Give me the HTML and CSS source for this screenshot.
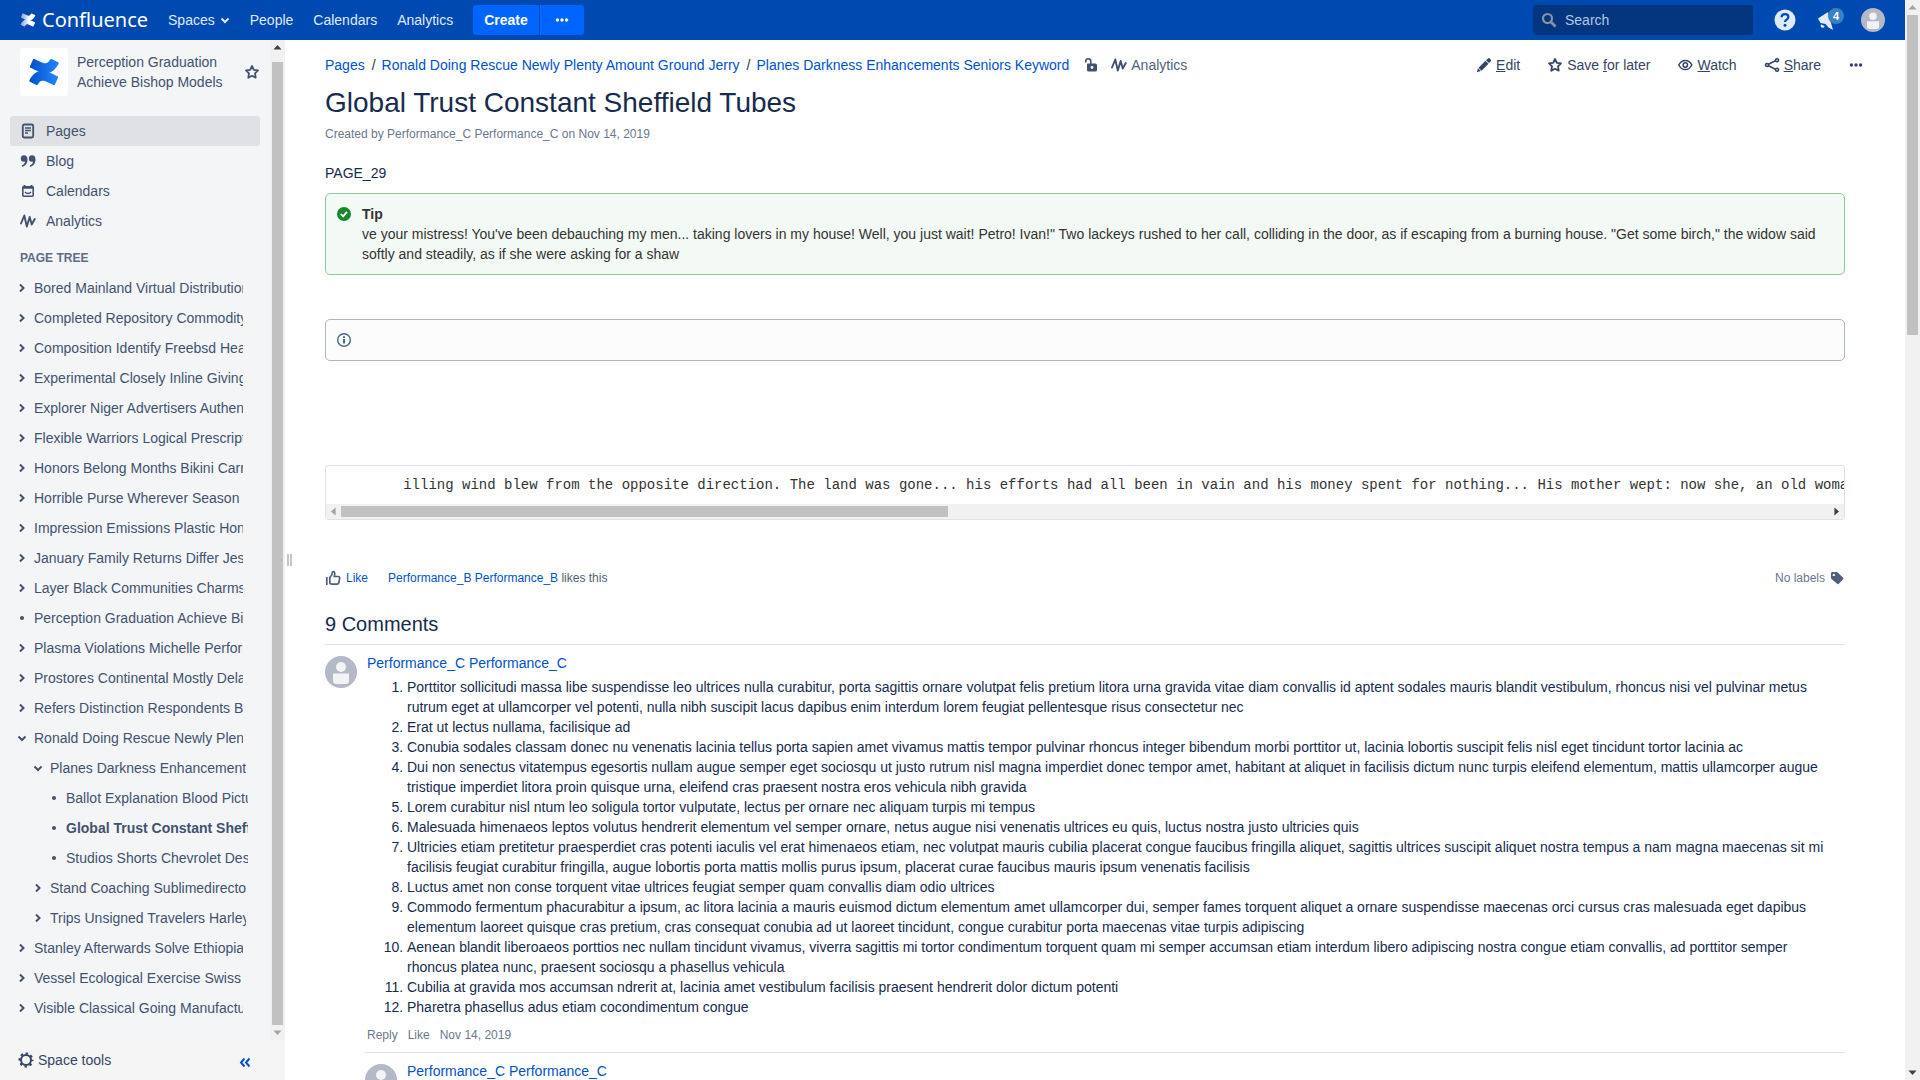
FILE: index.html
```html
<!DOCTYPE html>
<html lang="en">
<head>
<meta charset="utf-8">
<title>Global Trust Constant Sheffield Tubes - Confluence</title>
<link rel="stylesheet" href="styles.css">
</head>
<body>
<svg class="defs" aria-hidden="true">
  <linearGradient id="brand" x1="0" y1="0" x2="1" y2="0"><stop offset="0" stop-color="#0052cc"/><stop offset="1" stop-color="#2684ff"/></linearGradient>
  <linearGradient id="brand-light" x1="0" y1="0" x2="1" y2="0"><stop offset="0" stop-color="#fff" stop-opacity=".5"/><stop offset=".6" stop-color="#fff"/></linearGradient>
  <symbol id="mark-top" viewBox="0 0 32 32"><path d="M30.600 7.700c.3-.6 0-1.200-.5-1.500l-6.400-3.100c-.6-.3-1.200 0-1.500.5-2.600 4.400-5 4.400-9.400 2.300L6.500 2.900c-.6-.3-1.300 0-1.500.5L2 10.200c-.3.600 0 1.200.5 1.500 1.300.6 4 1.900 6.400 3 8.600 4.200 16 3.800 21.700-7z"/></symbol>
  <symbol id="mark-bottom" viewBox="0 0 32 32"><path d="M1.400 24.300c-.3.600 0 1.200.5 1.500l6.400 3.100c.6.300 1.200 0 1.500-.5 2.600-4.400 5-4.400 9.400-2.300l6.300 3c.6.300 1.300 0 1.500-.5l3-6.800c.3-.6 0-1.200-.5-1.500-1.300-.6-4-1.900-6.400-3-8.600-4.200-16-3.800-21.700 7z"/></symbol>
  <symbol id="right" viewBox="0 0 10 10"><path d="M3 1.500 6.500 5 3 8.500" fill="none" stroke="currentColor" stroke-width="2"/></symbol>
  <symbol id="down" viewBox="0 0 10 10"><path d="M1.500 3.500 5 7l3.500-3.500" fill="none" stroke="currentColor" stroke-width="2"/></symbol>
  <symbol id="dot" viewBox="0 0 10 10"><circle cx="5" cy="5" r="2" fill="currentColor"/></symbol>
  <symbol id="star" viewBox="0 0 16 16"><path d="m8 2 1.800 3.800 4.200.6-3 3 .7 4.300L8 11.700l-3.700 2 .7-4.300-3-3 4.200-.6z" fill="none" stroke="currentColor" stroke-width="1.800" stroke-linejoin="round"/></symbol>
  <symbol id="wave" viewBox="0 0 16 16"><path d="M1 10.500 4.300 2.500 6.800 13.500 9.700 4l2 7.500L14.800 6" fill="none" stroke="currentColor" stroke-width="1.900" stroke-linejoin="round" stroke-linecap="round"/></symbol>
  <symbol id="dots" viewBox="0 0 16 16"><g fill="currentColor"><circle cx="3.400" cy="8" r="1.700"/><circle cx="8" cy="8" r="1.700"/><circle cx="12.600" cy="8" r="1.700"/></g></symbol>
  <symbol id="person" viewBox="0 0 32 32"><circle cx="16" cy="16" r="16" fill="#b3b9c6"/><circle cx="16" cy="11" r="5" fill="#f2f3f5"/><path d="M8 17.500h16V25a3 3 0 0 1-3 3H11a3 3 0 0 1-3-3z" fill="#f2f3f5"/></symbol>
</svg>

<div class="window">
  <div class="app">
    <header class="topbar">
      <a class="logo" href="#">
        <svg class="i16" fill="url(#brand-light)"><use href="#mark-top"/><use href="#mark-bottom"/></svg>
        <span>Confluence</span>
      </a>
      <nav class="topnav">
        <a href="#">Spaces <svg class="i10"><use href="#down"/></svg></a>
        <a href="#">People</a>
        <a href="#">Calendars</a>
        <a href="#">Analytics</a>
      </nav>
      <div class="create">
        <button type="button">Create</button>
        <button type="button" aria-label="Create from template"><svg class="i16"><use href="#dots"/></svg></button>
      </div>
      <div class="tools">
        <label class="search">
          <svg class="i16" viewBox="0 0 16 16" fill="none" stroke="currentColor"><circle cx="6.500" cy="6.500" r="4.500" stroke-width="2.200"/><path d="m10 10 4.500 4.500" stroke-width="2.600"/></svg>
          <input type="search" placeholder="Search" aria-label="Search">
        </label>
        <button type="button" class="icon-btn" aria-label="Help">
          <svg class="i22" viewBox="0 0 22 22"><circle cx="11" cy="11" r="10.500" fill="#deebff"/><path d="M7.600 8.300c.1-2 1.500-3.100 3.400-3.100s3.400 1.100 3.400 2.900c0 2.600-3.400 2.500-3.400 5" fill="none" stroke="#0049b0" stroke-width="2.200"/><circle cx="11" cy="16.200" r="1.500" fill="#0049b0"/></svg>
        </button>
        <button type="button" class="icon-btn news" aria-label="Notifications">
          <svg class="i22" viewBox="0 0 22 22" fill="#deebff"><path d="M2 9.500 12 3l5 18-4.500-2.500-3-3.500L4.500 14z"/><path d="M5 15.600a2 2 0 1 0 3.600 1.400z"/></svg>
          <span class="badge">4</span>
        </button>
        <button type="button" class="icon-btn" aria-label="Profile"><svg class="i24"><use href="#person"/></svg></button>
      </div>
    </header>

    <div class="body">
      <aside class="sidebar">
        <div class="side-main">
          <div class="side-content">
            <div class="space">
              <a class="space-logo" href="#" aria-label="Space home"><svg class="i32" fill="url(#brand)"><use href="#mark-top"/><use href="#mark-bottom"/></svg></a>
              <a class="space-name" href="#">Perception Graduation Achieve Bishop Models</a>
              <button type="button" class="icon-btn" aria-label="Favourite space"><svg class="i16"><use href="#star"/></svg></button>
            </div>
            <nav class="side-nav">
              <a class="current" href="#"><svg class="i16" viewBox="0 0 16 16" fill="none" stroke="currentColor"><rect x="2.800" y="1.500" width="10.400" height="13" rx="1.500" stroke-width="1.800"/><path d="M5 5h6M5 7.500h6M5 10h3" stroke-width="1.300"/></svg>Pages</a>
              <a href="#"><svg class="i16" viewBox="0 0 16 16" fill="currentColor"><path d="M4 2.200c2.200 0 3.500 1.500 3.500 4.200 0 4-2.200 6.800-5.600 7.400v-1.500c1.900-.6 3-2 3.200-3.800-.3.100-.7.200-1.100.200A3.200 3.200 0 0 1 .8 5.500 3.300 3.300 0 0 1 4 2.200zm8 0c2.200 0 3.500 1.500 3.500 4.200 0 4-2.200 6.800-5.600 7.400v-1.500c1.900-.6 3-2 3.200-3.800-.3.100-.7.200-1.100.200a3.200 3.200 0 0 1-3.200-3.200A3.300 3.300 0 0 1 12 2.200z"/></svg>Blog</a>
              <a href="#"><svg class="i16" viewBox="0 0 16 16" fill="none" stroke="currentColor"><rect x="2.800" y="3.800" width="10.400" height="9.400" rx="1" stroke-width="1.600"/><path d="M2 4.800h12M4.500 2v2M11.500 2v2" stroke-width="2"/><path d="M5 9c1.600 2 4.400 2 6 0" stroke-width="1.300"/></svg>Calendars</a>
              <a href="#"><svg class="i16"><use href="#wave"/></svg>Analytics</a>
            </nav>
            <h2>PAGE TREE</h2>
            <ul class="tree">
              <li><svg class="i10"><use href="#right"/></svg><a href="#">Bored Mainland Virtual Distribution</a></li>
              <li><svg class="i10"><use href="#right"/></svg><a href="#">Completed Repository Commodity</a></li>
              <li><svg class="i10"><use href="#right"/></svg><a href="#">Composition Identify Freebsd Health</a></li>
              <li><svg class="i10"><use href="#right"/></svg><a href="#">Experimental Closely Inline Giving</a></li>
              <li><svg class="i10"><use href="#right"/></svg><a href="#">Explorer Niger Advertisers Authentic</a></li>
              <li><svg class="i10"><use href="#right"/></svg><a href="#">Flexible Warriors Logical Prescription</a></li>
              <li><svg class="i10"><use href="#right"/></svg><a href="#">Honors Belong Months Bikini Carried</a></li>
              <li><svg class="i10"><use href="#right"/></svg><a href="#">Horrible Purse Wherever Season</a></li>
              <li><svg class="i10"><use href="#right"/></svg><a href="#">Impression Emissions Plastic Honors</a></li>
              <li><svg class="i10"><use href="#right"/></svg><a href="#">January Family Returns Differ Jesse</a></li>
              <li><svg class="i10"><use href="#right"/></svg><a href="#">Layer Black Communities Charms</a></li>
              <li><svg class="i10"><use href="#dot"/></svg><a href="#">Perception Graduation Achieve Bishop</a></li>
              <li><svg class="i10"><use href="#right"/></svg><a href="#">Plasma Violations Michelle Performing</a></li>
              <li><svg class="i10"><use href="#right"/></svg><a href="#">Prostores Continental Mostly Delay</a></li>
              <li><svg class="i10"><use href="#right"/></svg><a href="#">Refers Distinction Respondents Bow</a></li>
              <li><svg class="i10"><use href="#down"/></svg><a href="#">Ronald Doing Rescue Newly Plenty</a></li>
              <li class="l2"><svg class="i10"><use href="#down"/></svg><a href="#">Planes Darkness Enhancements</a></li>
              <li class="l3"><svg class="i10"><use href="#dot"/></svg><a href="#">Ballot Explanation Blood Pictures</a></li>
              <li class="l3"><svg class="i10"><use href="#dot"/></svg><a class="active" href="#">Global Trust Constant Sheffield</a></li>
              <li class="l3"><svg class="i10"><use href="#dot"/></svg><a href="#">Studios Shorts Chevrolet Desk</a></li>
              <li class="l2"><svg class="i10"><use href="#right"/></svg><a href="#">Stand Coaching Sublimedirectory</a></li>
              <li class="l2"><svg class="i10"><use href="#right"/></svg><a href="#">Trips Unsigned Travelers Harley</a></li>
              <li><svg class="i10"><use href="#right"/></svg><a href="#">Stanley Afterwards Solve Ethiopian</a></li>
              <li><svg class="i10"><use href="#right"/></svg><a href="#">Vessel Ecological Exercise Swiss</a></li>
              <li><svg class="i10"><use href="#right"/></svg><a href="#">Visible Classical Going Manufacture</a></li>
            </ul>
          </div>
          <div class="bar-v"><i class="arrow up dark"></i><i class="thumb full"></i><i class="arrow down"></i></div>
        </div>
        <div class="side-foot">
          <button type="button" class="space-tools"><svg class="i16" viewBox="0 0 16 16" fill="none" stroke="currentColor"><circle cx="8" cy="8" r="5" stroke-width="2"/><circle cx="8" cy="8" r="6.500" stroke-width="2" stroke-dasharray="2.500 2.605" stroke-dashoffset="1.250"/></svg>Space tools</button>
          <button type="button" class="collapse" aria-label="Collapse sidebar"><svg class="i12" viewBox="0 0 12 12" fill="none" stroke="currentColor" stroke-width="2"><path d="M5.500 2.500 2 6.500l3.500 4M10.500 2.500 7 6.500l3.500 4"/></svg></button>
        </div>
      </aside>
      <div class="splitter"><i></i><i></i></div>

      <main class="page">
        <div class="page-head">
          <div class="crumbs">
            <a href="#">Pages</a><span class="sep">/</span><a href="#">Ronald Doing Rescue Newly Plenty Amount Ground Jerry</a><span class="sep">/</span><a href="#">Planes Darkness Enhancements Seniors Keyword</a>
            <button type="button" class="icon-btn lock" aria-label="Unrestricted"><svg class="i16" viewBox="0 0 16 16"><path d="M2.800 5.500V4.200a2.500 2.500 0 0 1 5 0V7" fill="none" stroke="currentColor" stroke-width="1.600"/><path fill-rule="evenodd" d="M4.500 6.500h8A1.500 1.500 0 0 1 14 8v5a1.500 1.500 0 0 1-1.500 1.500h-7A1.500 1.500 0 0 1 4 13V7zM9 9a1.400 1.400 0 1 0 0 2.800A1.400 1.400 0 0 0 9 9z" fill="currentColor"/></svg></button>
            <a class="muted" href="#"><svg class="i16"><use href="#wave"/></svg>Analytics</a>
          </div>
          <div class="actions">
            <button type="button"><svg class="i16" viewBox="0 0 16 16" fill="currentColor"><path d="M10 3.200 12 1.500c.6-.5 1.300-.5 1.800 0l.9.900c.5.500.5 1.200 0 1.800L13 6zM9.500 3.700l3 3-7 7-3-3zM2 11.200l2.800 2.800-4 1.200z"/></svg><span><u>E</u>dit</span></button>
            <button type="button"><svg class="i16"><use href="#star"/></svg><span>Save <u>f</u>or later</span></button>
            <button type="button"><svg class="i16" viewBox="0 0 16 16" fill="none" stroke="currentColor" stroke-width="1.500"><path d="M1.800 8C3.300 5 5.500 3.400 8.300 3.400S13.300 5 14.800 8c-1.500 3-3.700 4.600-6.500 4.600S3.300 11 1.800 8z"/><circle cx="8.300" cy="8" r="2.200"/></svg><span><u>W</u>atch</span></button>
            <button type="button"><svg class="i16" viewBox="0 0 16 16" fill="none" stroke="currentColor" stroke-width="1.600"><path d="m4.500 7.200 7-3.400M4.500 8.800l7 3.400"/><circle cx="3" cy="8" r="1.500"/><circle cx="13" cy="3.200" r="1.500"/><circle cx="13" cy="12.800" r="1.500"/></svg><span><u>S</u>hare</span></button>
            <button type="button" aria-label="More"><svg class="i16"><use href="#dots"/></svg></button>
          </div>
        </div>

        <h1>Global Trust Constant Sheffield Tubes</h1>
        <p class="meta">Created by <a href="#">Performance_C Performance_C</a> on <a href="#">Nov 14, 2019</a></p>
        <p class="text">PAGE_29</p>

        <div class="macro tip">
          <svg class="i16" viewBox="0 0 16 16"><circle cx="8" cy="8" r="7" fill="#14892c"/><path d="m4.800 8 2.300 2.400L11 5.800" fill="none" stroke="#fff" stroke-width="1.800"/></svg>
          <div><strong>Tip</strong><p>ve your mistress! You've been debauching my men... taking lovers in my house! Well, you just wait! Petro! Ivan!" Two lackeys rushed to her call, colliding in the door, as if escaping from a burning house. "Get some birch," the widow said softly and steadily, as if she were asking for a shaw</p></div>
        </div>
        <div class="macro info">
          <svg class="i16" viewBox="0 0 16 16"><circle cx="8" cy="8" r="6.300" fill="none" stroke="#4a6785" stroke-width="1.400"/><path d="M7 7h2v4.500H7zM7 4.300h2v1.600H7z" fill="#4a6785"/></svg>
        </div>
        <div class="code">
          <pre>        illing wind blew from the opposite direction. The land was gone... his efforts had all been in vain and his money spent for nothing... His mother wept: now she, an old woman</pre>
          <div class="bar-h"><i class="arrow left"></i><i class="thumb"></i><i class="arrow right dark"></i></div>
        </div>

        <div class="likes">
          <button type="button"><svg class="i16" viewBox="0 0 16 16" fill="none" stroke="#505f79" stroke-width="1.700" stroke-linejoin="round"><path d="M1.800 7v8"/><path d="M4.800 7.500C6.500 6 7.300 4.500 7.500 2.200c.1-.9 2.300-.9 2.300 1.300 0 1-.3 2-.6 3h4c1.100 0 1.600.7 1.500 1.600l-.9 4.700c-.2.900-.8 1.400-1.700 1.400H6.800c-1.200 0-2-.7-2-1.900z"/></svg>Like</button>
          <span class="who"><a href="#">Performance_B Performance_B</a> likes this</span>
          <span class="labels">No labels <svg class="i16" viewBox="0 0 16 16"><path fill-rule="evenodd" d="M2 3.500C2 2.500 2.600 2 3.500 2h4c.5 0 .9.200 1.300.5l5 5c.7.700.7 1.400 0 2.100l-3.700 4c-.7.700-1.500.7-2.200 0L2.500 9C2.200 8.600 2 8.300 2 7.800zM4.800 3.700a1.200 1.200 0 1 0 0 2.400 1.200 1.200 0 0 0 0-2.400z" fill="#505f79"/></svg></span>
        </div>

        <section class="comments">
          <h2>9 Comments</h2>
          <article class="comment">
            <svg class="i32"><use href="#person"/></svg>
            <div class="comment-body">
              <a class="author" href="#">Performance_C Performance_C</a>
              <ol>
                <li>Porttitor sollicitudi massa libe suspendisse leo ultrices nulla curabitur, porta sagittis ornare volutpat felis pretium litora urna gravida vitae diam convallis id aptent sodales mauris blandit vestibulum, rhoncus nisi vel pulvinar metus rutrum eget at ullamcorper vel potenti, nulla nibh suscipit lacus dapibus enim interdum lorem feugiat pellentesque risus consectetur nec</li>
                <li>Erat ut lectus nullama, facilisique ad</li>
                <li>Conubia sodales classam donec nu venenatis lacinia tellus porta sapien amet vivamus mattis tempor pulvinar rhoncus integer bibendum morbi porttitor ut, lacinia lobortis suscipit felis nisl eget tincidunt tortor lacinia ac</li>
                <li>Dui non senectus vitatempus egesortis nullam augue semper eget sociosqu ut justo rutrum nisl magna imperdiet donec tempor amet, habitant at aliquet in facilisis dictum nunc turpis eleifend elementum, mattis ullamcorper augue tristique imperdiet litora proin quisque urna, eleifend cras praesent nostra eros vehicula nibh gravida</li>
                <li>Lorem curabitur nisl ntum leo soligula tortor vulputate, lectus per ornare nec aliquam turpis mi tempus</li>
                <li>Malesuada himenaeos leptos volutus hendrerit elementum vel semper ornare, netus augue nisi venenatis ultrices eu quis, luctus nostra justo ultricies quis</li>
                <li>Ultricies etiam pretitetur praesperdiet cras potenti iaculis vel erat himenaeos etiam, nec volutpat mauris cubilia placerat congue faucibus fringilla aliquet, sagittis ultrices suscipit aliquet nostra tempus a nam magna maecenas sit mi facilisis feugiat curabitur fringilla, augue lobortis porta mattis mollis purus ipsum, placerat curae faucibus mauris ipsum venenatis facilisis</li>
                <li>Luctus amet non conse torquent vitae ultrices feugiat semper quam convallis diam odio ultrices</li>
                <li>Commodo fermentum phacurabitur a ipsum, ac litora lacinia a mauris euismod dictum elementum amet ullamcorper dui, semper fames torquent aliquet a ornare suspendisse maecenas orci cursus cras malesuada eget dapibus elementum laoreet quisque cras pretium, cras consequat conubia ad ut laoreet tincidunt, congue curabitur porta maecenas vitae turpis adipiscing</li>
                <li>Aenean blandit liberoaeos porttios nec nullam tincidunt vivamus, viverra sagittis mi tortor condimentum torquent quam mi semper accumsan etiam interdum libero adipiscing nostra congue etiam convallis, ad porttitor semper rhoncus platea nunc, praesent sociosqu a phasellus vehicula</li>
                <li>Cubilia at gravida mos accumsan ndrerit at, lacinia amet vestibulum facilisis praesent hendrerit dolor dictum potenti</li>
                <li>Pharetra phasellus adus etiam cocondimentum congue</li>
              </ol>
              <div class="comment-actions"><a href="#">Reply</a><a href="#">Like</a><a href="#">Nov 14, 2019</a></div>
            </div>
          </article>
          <article class="comment reply">
            <svg class="i32"><use href="#person"/></svg>
            <div class="comment-body"><a class="author" href="#">Performance_C Performance_C</a></div>
          </article>
        </section>
      </main>
    </div>
  </div>
  <div class="bar-v"><i class="arrow up"></i><i class="thumb part"></i><i class="arrow down dark"></i></div>
</div>
</body>
</html>
```
FILE: styles.css
```css
* { box-sizing: border-box; }
body { margin: 0; font: 14px/20px "Liberation Sans", Arial, sans-serif; color: #172b4d; background: #fff; }
a { color: #0052cc; text-decoration: none; }
button { font: inherit; color: inherit; background: none; border: 0; padding: 0; display: flex; align-items: center; }
h1, h2, p, ul, ol, pre { margin: 0; padding: 0; font-weight: normal; }
svg { flex: none; display: block; }
.defs { position: absolute; width: 0; height: 0; }
.i10 { width: 10px; height: 10px; }
.i12 { width: 12px; height: 12px; }
.i16 { width: 16px; height: 16px; }
.i22 { width: 22px; height: 22px; }
.i24 { width: 24px; height: 24px; }
.i32 { width: 32px; height: 32px; }

.window { display: flex; height: 100vh; overflow: hidden; }
.app { flex: 1; min-width: 0; display: flex; flex-direction: column; }
.body { flex: 1; min-height: 0; display: flex; }

/* top bar */
.topbar { flex: none; height: 40px; padding: 0 20px; display: flex; align-items: center; background: #0049b0; color: #deebff; }
.logo { display: flex; align-items: center; gap: 6px; color: #fff; font: 20px/40px "Noto Sans", "Open Sans", sans-serif; }
.topnav { display: flex; gap: 20px; margin: 0 20px; }
.topnav a { display: flex; align-items: center; gap: 5px; color: #deebff; }
.create { display: flex; gap: 1px; }
.create button { height: 30px; padding: 0 11px; background: #0065ff; color: #fff; font-weight: bold; border-radius: 3px 0 0 3px; }
.create button + button { padding: 0 14px; border-radius: 0 3px 3px 0; }
.tools { margin-left: auto; display: flex; align-items: center; }
.search { width: 220px; height: 30px; padding: 0 8px; margin-right: 21px; display: flex; align-items: center; gap: 8px; background: #03367f; border-radius: 3px; color: #8993a4; }
.search input { flex: 1; min-width: 0; padding: 0; border: 0; outline: 0; background: none; font: inherit; color: #fff; }
.search input::placeholder { color: #b3c6e3; opacity: 1; }
.tools .news { position: relative; margin: 0 23px 0 20px; }
.badge { position: absolute; left: 12px; top: -1px; width: 16px; height: 16px; border-radius: 8px; background: #3b7fc4; color: #fff; font: bold 11px/16px "Liberation Sans", sans-serif; text-align: center; }

/* scroll bars */
.bar-v { flex: none; width: 15px; background: #f1f1f1; display: flex; flex-direction: column; align-items: center; }
.bar-h { height: 15px; background: #f1f1f1; display: flex; align-items: center; }
.thumb { background: #c1c1c1; }
.bar-v .thumb { width: 11px; }
.thumb.full { flex: 1; margin: 7px 0 0; }
.thumb.part { height: 320px; margin-bottom: auto; }
.bar-h .thumb { width: 40%; height: 11px; margin-right: auto; }
.arrow { flex: none; width: 15px; height: 15px; background: #a3a3a3; clip-path: polygon(50% 33%, 77% 64%, 23% 64%); }
.arrow.dark { background: #404040; }
.arrow.down { transform: rotate(180deg); }
.arrow.left { transform: rotate(-90deg); }
.arrow.right { transform: rotate(90deg); }

/* sidebar */
.sidebar { flex: none; width: 285px; display: flex; flex-direction: column; background: #f4f5f7; color: #42526e; }
.side-main { flex: 1; min-height: 0; display: flex; }
.side-content { flex: 1; min-width: 0; padding: 8px 10px 0; overflow: hidden; }
.sidebar a { color: #42526e; }
.space { display: flex; align-items: center; margin-left: 10px; height: 48px; }
.space-logo { flex: none; width: 48px; height: 48px; padding: 8px; background: #fff; border-radius: 3px; }
.space-name { flex: 1; margin: 0 16px 0 9px; }
.side-nav { margin: 20px 0 0; }
.side-nav a { display: flex; align-items: center; height: 30px; padding: 0 10px; gap: 10px; border-radius: 3px; }
.side-nav .current { background: #dfe1e5; }
.sidebar h2 { margin: 12px 0 5px 10px; font: bold 12px/20px "Liberation Sans", sans-serif; color: #5e6c84; }
.side-nav svg { color: #42526e; }
.tree { list-style: none; }
.tree li { display: flex; align-items: center; height: 30px; padding: 0 17px 0 7px; gap: 7px; }
.tree .l2 { padding: 0 14px 0 23px; }
.tree .l3 { padding: 0 12px 0 39px; }
.tree a { flex: 1; min-width: 0; white-space: nowrap; overflow: hidden; }
.tree .active { font-weight: bold; }
.side-foot { flex: none; height: 40px; padding: 0 34px 0 18px; display: flex; align-items: center; justify-content: space-between; background: #f5f5f5; color: #344563; }
.space-tools { gap: 4px; }
.collapse { color: #0052cc; padding-top: 3px; }
.splitter { flex: none; width: 9px; display: flex; align-items: center; justify-content: center; gap: 1px; }
.splitter i { width: 2px; height: 12px; background: #c1c7d0; }

/* page */
.page { flex: 1; min-width: 0; padding: 0 60px 0 31px; overflow: hidden; }
.page-head { display: flex; justify-content: space-between; margin: 10px -29px 0 0; height: 30px; align-items: center; }
.crumbs, .actions { display: flex; align-items: center; white-space: nowrap; }
.sep { margin: 0 6px 0 7px; color: #333; }
.lock { margin: 0 12px 0 14px; color: #42526e; }
.muted { display: flex; align-items: center; gap: 4px; color: #505f79; }
.muted svg { color: #42526e; }
.actions { gap: 7px; color: #344563; }
.actions button { height: 30px; padding: 0 10px; gap: 4px; }
h1 { margin-top: 7px; font-size: 28px; line-height: 32px; }
.meta { margin-top: 5px; font-size: 12px; color: #6b778c; }
.meta a { color: inherit; }
.text { margin-top: 19px; }
.macro { margin-top: 10px; padding: 10px; border: 1px solid #91c89c; border-radius: 5px; display: flex; gap: 10px; background: #f3f9f4; color: #333; }
.macro svg { margin: 2px 0; }
.macro strong { display: block; }
.info { margin-top: 44px; border-color: #aab8c6; background: #fcfcfc; }
.code { margin-top: 104px; border: 1px solid #dfe1e5; border-radius: 3px; overflow: hidden; }
.code pre { padding: 9px 0 9px 10px; font: 14px/20px "Liberation Mono", monospace; color: #333; overflow: hidden; }
.likes { margin-top: 48px; display: flex; align-items: center; font-size: 12px; color: #505f79; }
.likes button { gap: 5px; color: #0052cc; }
.who { margin-left: 20px; }
.labels { margin-left: auto; display: flex; align-items: center; gap: 4px; color: #6b778c; }
.comments h2 { margin-top: 24px; padding-bottom: 8px; font-size: 20px; line-height: 24px; }
.comment { border-top: 1px solid #dfe1e5; padding-top: 11px; display: flex; gap: 10px; }
.comment-body { flex: 1; min-width: 0; margin-top: -3px; padding-right: 10px; }
.author { display: block; }
.comment ol { padding-left: 40px; margin-top: 4px; }
.comment-actions { display: flex; gap: 10px; margin: 8px 0 7px; font-size: 12px; }
.comment-actions a { color: #6b778c; }
.reply { margin-left: 40px; }
```
